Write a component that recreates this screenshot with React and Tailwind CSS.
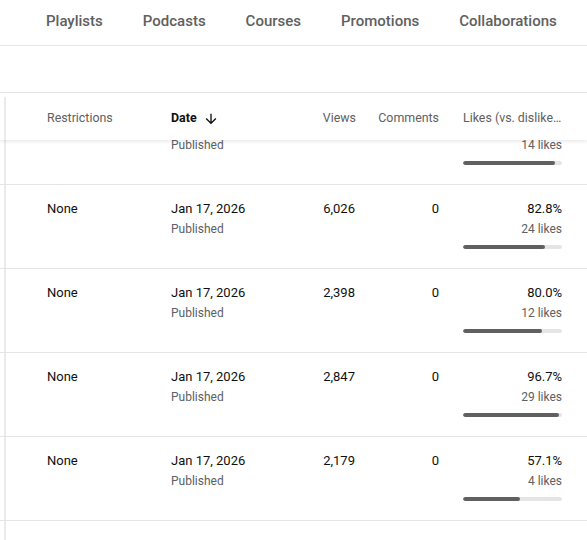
import React from "react";

const tabs = ["Playlists", "Podcasts", "Courses", "Promotions", "Collaborations"];

// The first row is scrolled up under the sticky header; only its lower half shows.
const rows = [
  { hidden: true, views: "3,912", comments: "0", pct: "93.3%", likes: "14 likes", fill: 93 },
  { views: "6,026", comments: "0", pct: "82.8%", likes: "24 likes", fill: 83 },
  { views: "2,398", comments: "0", pct: "80.0%", likes: "12 likes", fill: 80 },
  { views: "2,847", comments: "0", pct: "96.7%", likes: "29 likes", fill: 97 },
  { views: "2,179", comments: "0", pct: "57.1%", likes: "4 likes", fill: 57.5 },
];

function StickyEdge() {
  return (
    <div className="flex shrink-0 self-stretch">
      <div className="w-[4px]" />
      <div className="w-[2px] bg-[#ebebeb]" />
    </div>
  );
}

function ArrowDown() {
  return (
    <svg viewBox="0 0 24 24" className="h-[16px] w-[16px] fill-[#0f0f0f]">
      <path d="M20 12l-1.41-1.41L13 16.17V4h-2v12.17l-5.58-5.59L4 12l8 8 8-8z" />
    </svg>
  );
}

function Row({ r }) {
  const top = (v) => (r.hidden ? "\u00a0" : v);
  return (
    <div className="flex h-[84px] border-b border-[#e5e5e5] bg-white">
      <StickyEdge />
      <div className="w-[165px] shrink-0 pl-[41px] pt-[14px] text-[13px] leading-[20px] text-[#0f0f0f]">
        {top("None")}
      </div>
      <div className="w-[124px] shrink-0 pt-[14px]">
        <div className="text-[13px] leading-[20px] text-[#0f0f0f]">{top("Jan 17, 2026")}</div>
        <div className="text-[12px] leading-[20px] text-[#606060]">Published</div>
      </div>
      <div className="w-[60px] shrink-0 pt-[14px] text-right text-[13px] leading-[20px] text-[#0f0f0f]">
        {top(r.views)}
      </div>
      <div className="w-[84px] shrink-0 pt-[14px] text-right text-[13px] leading-[20px] text-[#0f0f0f]">
        {top(r.comments)}
      </div>
      <div className="ml-[24px] w-[99px] shrink-0 pt-[14px] text-right">
        <div className="text-[13px] leading-[20px] text-[#0f0f0f]">{top(r.pct)}</div>
        <div className="text-[12px] leading-[20px] text-[#606060]">{r.likes}</div>
        <div className="mt-[6px] h-[4px] w-full overflow-hidden rounded-full bg-[#e5e5e5]">
          <div className="h-full rounded-full bg-[#606060]" style={{ width: `${r.fill}%` }} />
        </div>
      </div>
    </div>
  );
}

export default function App() {
  return (
    <div className="h-[540px] w-[587px] overflow-hidden bg-white font-['Roboto',sans-serif]">
      {/* channel content tabs */}
      <div className="flex h-[46px] items-start overflow-hidden border-b border-[#e5e5e5]">
        <div className="ml-[46px] flex gap-[40px] pt-[11px]">
          {tabs.map((t) => (
            <span key={t} className="whitespace-nowrap text-[15px] font-medium leading-[20px] text-[#606060]">
              {t}
            </span>
          ))}
        </div>
      </div>

      {/* filter bar */}
      <div className="h-[47px] border-b border-[#e5e5e5]" />

      {/* table */}
      <div className="relative">
        <div className="relative z-10 flex h-[47px] bg-white pt-[4px] shadow-[0_2px_3px_rgba(0,0,0,0.08)]">
          <StickyEdge />
          <div className="flex w-[165px] shrink-0 items-center pl-[41px] text-[12.4px] text-[#606060]">
            Restrictions
          </div>
          <div className="flex w-[124px] shrink-0 items-center gap-[6px] text-[12.4px] font-bold text-[#0f0f0f]">
            <span>Date</span>
            <ArrowDown />
          </div>
          <div className="flex w-[61px] shrink-0 items-center justify-end text-[12.4px] text-[#606060]">
            Views
          </div>
          <div className="flex w-[83px] shrink-0 items-center justify-end text-[12.4px] text-[#606060]">
            Comments
          </div>
          <div className="ml-[24px] flex w-[99px] min-w-0 shrink-0 items-center text-[12.4px] text-[#606060]">
            <span className="min-w-0 truncate">Likes (vs. dislikes)</span>
          </div>
        </div>
        <div className="mt-[-39px]">
          {rows.map((r, i) => (
            <Row key={i} r={r} />
          ))}
          <div className="flex h-[60px]">
            <StickyEdge />
          </div>
        </div>
      </div>
    </div>
  );
}
